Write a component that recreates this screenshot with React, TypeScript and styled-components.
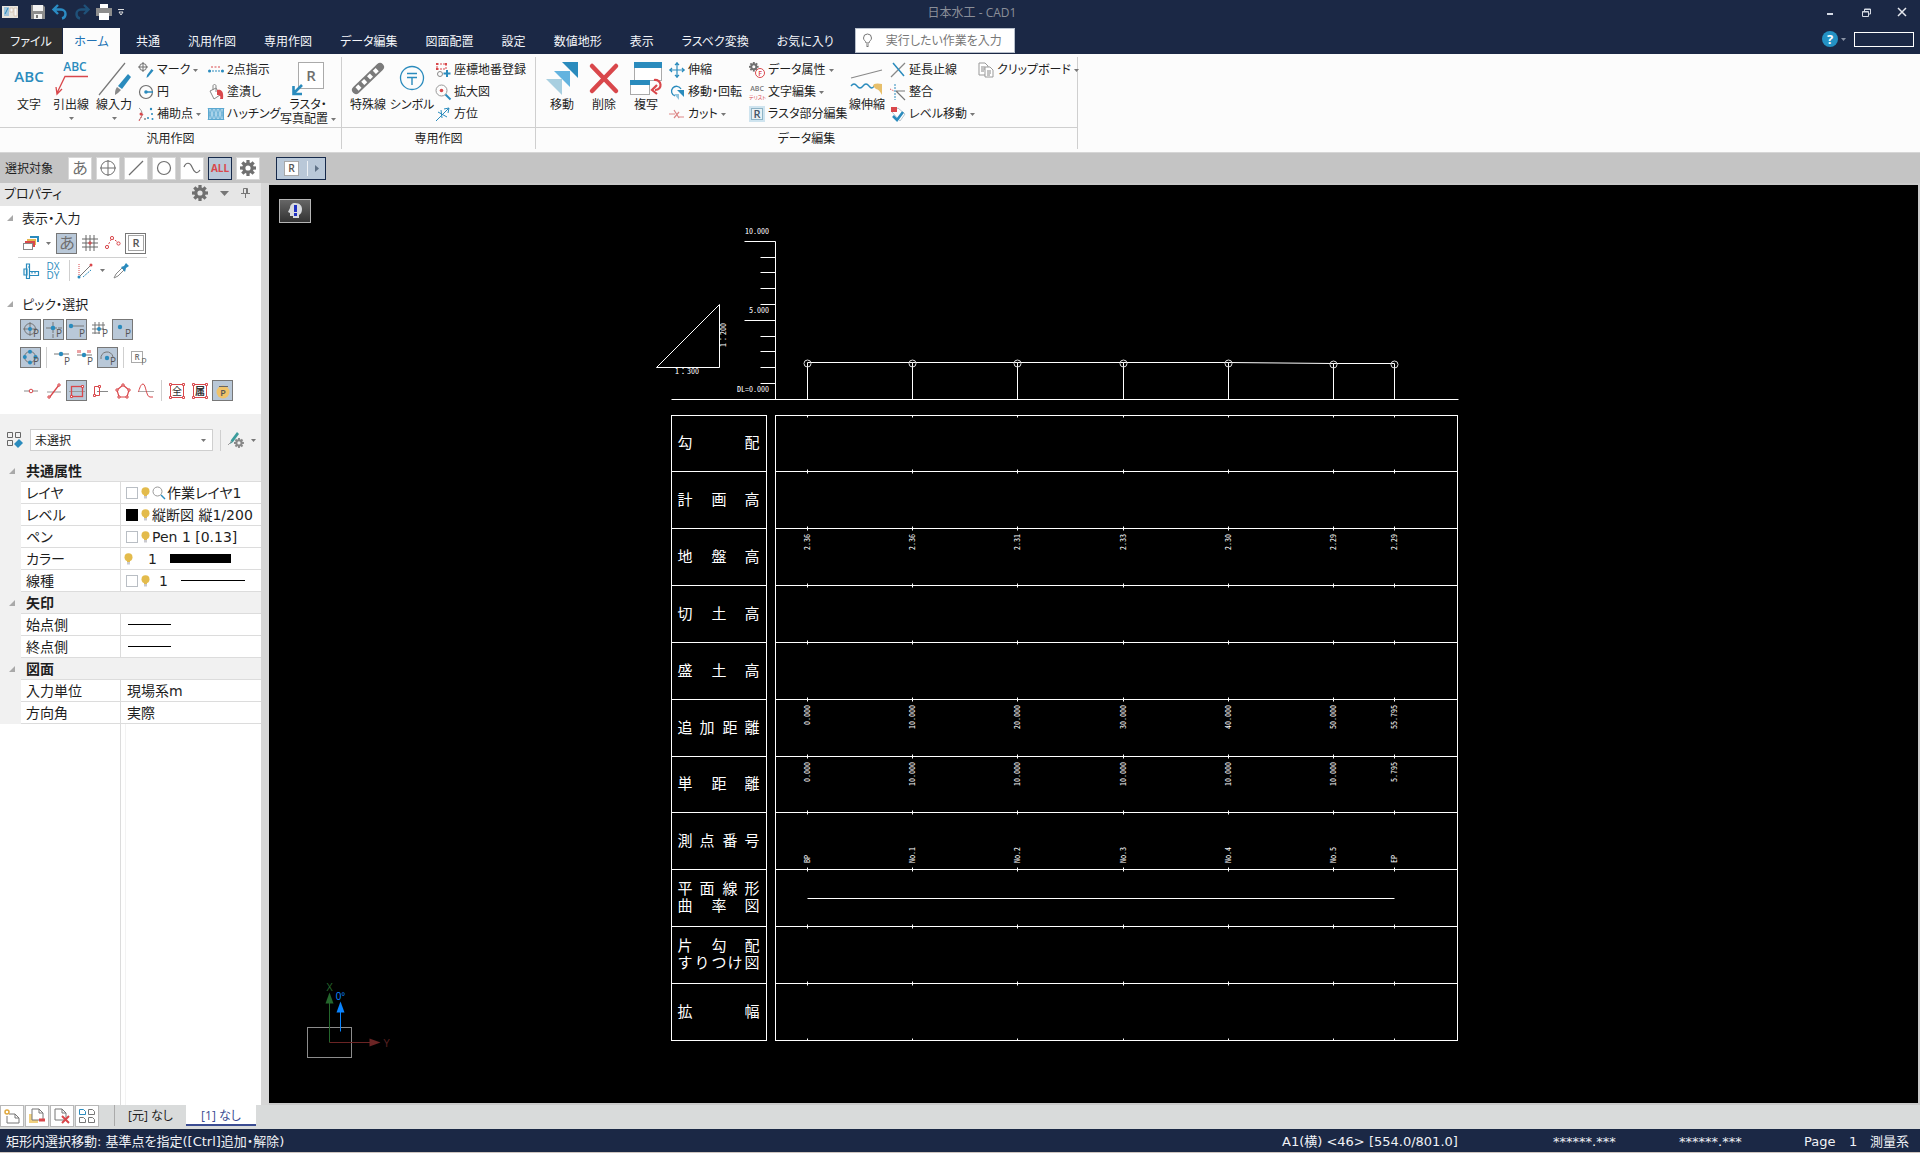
import React from "react";
import styled, { createGlobalStyle, css } from "styled-components";

const UI = `"Open Sans", "Noto Sans CJK JP", sans-serif`;
const WIDE = `"DejaVu Sans", "Noto Sans CJK JP", sans-serif`;
const CAD = `"Noto Sans CJK JP", sans-serif`;

const navy = "#1b2845";
const blue = "#2a8bbd";
const red = "#d9474b";
const gray = "#6f6f6f";
const pressed = "#b9c8d8";

const GlobalStyle = createGlobalStyle`
  * { box-sizing: border-box; }
  body {
    margin: 0;
    background: #d9dbdb;
    font-family: ${UI};
    font-size: 12px;
    font-feature-settings: "palt";
    color: #1e1e1e;
  }
  button, input, select {
    font: inherit;
    font-feature-settings: inherit;
    color: inherit;
    margin: 0;
    padding: 0;
    border: 0;
    border-radius: 0;
    background: none;
  }
  svg { display: block; flex: none; overflow: visible; }
`;

const Shell = styled.div`
  display: flex;
  flex-direction: column;
  min-height: 100vh;
`;

/* ---------- title bar ---------- */
const TitleBar = styled.header`
  display: flex;
  height: 28px;
  background: ${navy};
`;
const QuickAccess = styled.div`
  display: flex;
  align-items: center;
  width: 132px;
  height: 24px;
  padding-left: 2px;
  gap: 6px;
  & > svg { margin-right: 6px; }
`;
const QuickButton = styled.button`
  display: flex;
  width: 16px;
`;
const WindowTitle = styled.h1`
  flex: 1;
  margin: 0;
  font-size: 12px;
  font-weight: 400;
  line-height: 25px;
  text-align: center;
  color: #8b8f99;
`;
const WindowButton = styled.button`
  display: flex;
  align-items: center;
  justify-content: center;
  width: 36px;
  height: 24px;
`;

/* ---------- ribbon tabs ---------- */
const TabBar = styled.nav`
  display: flex;
  height: 26px;
  background: ${navy};
`;
const Tab = styled.button<{ $kind?: "file" | "active" }>`
  padding: 0 14px;
  line-height: 25px;
  color: #f4f6fa;
  white-space: nowrap;
  ${(p) => p.$kind === "file" && css`width: 62px; padding: 0; margin-right: 1px; background: #2f2f2f;`}
  ${(p) => p.$kind === "active" && css`width: 57px; padding: 0; margin-right: 2px; background: #fcfcfc; color: #2272b4;`}
`;
const Search = styled.label`
  display: flex;
  align-items: center;
  gap: 14px;
  width: 160px;
  height: 25px;
  margin-left: 7px;
  padding-left: 7px;
  background: #fff;
  border: 1px solid #b8c0cc;
`;
const SearchInput = styled.input`
  width: 120px;
  outline: none;
  &::placeholder { color: #777; opacity: 1; }
`;
const HelpArea = styled.div`
  display: flex;
  align-items: center;
  gap: 4px;
  height: 22px;
  margin-left: auto;
  padding-right: 6px;
`;
const HelpButton = styled.button`
  display: flex;
  align-items: center;
  gap: 3px;
`;
const AccountBox = styled.button`
  width: 60px;
  height: 15px;
  margin-left: 4px;
  border: 1px solid #fff;
`;

/* ---------- ribbon ---------- */
const Ribbon = styled.div`
  display: flex;
  height: 98px;
  padding-top: 3px;
  background: #fcfcfc;
`;
const Group = styled.section<{ $pad: number; $width: number }>`
  display: flex;
  flex-direction: column;
  width: ${(p) => p.$width}px;
  height: 92px;
  border-right: 1px solid #cfcfcf;
  & > div { padding-left: ${(p) => p.$pad}px; }
`;
const GroupBody = styled.div`
  display: flex;
  height: 73px;
  border-bottom: 1px solid #cfcfcf;
`;
const GroupName = styled.h2`
  margin: 0;
  font-size: 12px;
  font-weight: 400;
  line-height: 21px;
  text-align: center;
`;
const BigButton = styled.button<{ $width: number }>`
  display: flex;
  flex-direction: column;
  align-items: center;
  justify-content: flex-start;
  width: ${(p) => p.$width}px;
  padding-top: 5px;
  line-height: 14px;
  white-space: nowrap;
  & > svg:first-child { margin-bottom: 3px; }
  & > svg:last-child { margin-top: 5px; }
`;
const CaptionRow = styled.span`
  display: flex;
  align-items: center;
  gap: 3px;
`;
const SmallColumn = styled.div<{ $width: number }>`
  display: flex;
  flex-direction: column;
  width: ${(p) => p.$width}px;
  padding-top: 2px;
`;
const SmallButton = styled.button`
  display: flex;
  align-items: center;
  gap: 3px;
  height: 22px;
  padding-left: 2px;
  line-height: 22px;
  white-space: nowrap;
`;

/* ---------- selection bar ---------- */
const SelectionBar = styled.div`
  display: flex;
  align-items: center;
  gap: 4px;
  height: 31px;
  padding-left: 5px;
  background: #c4c4c4;
  border-top: 1px solid #d6d6d6;
`;
const BarLabel = styled.span`
  width: 59px;
`;
const FilterButton = styled.button<{ $on?: boolean; $wide?: boolean }>`
  display: flex;
  align-items: center;
  justify-content: center;
  gap: 8px;
  width: ${(p) => (p.$wide ? 50 : 24)}px;
  height: 23px;
  margin-left: ${(p) => (p.$wide ? 12 : 0)}px;
  background: ${(p) => (p.$on ? pressed : "#fff")};
  border: 1px solid ${(p) => (p.$on ? "#16294a" : "#d8d8d8")};
`;

/* ---------- workspace ---------- */
const Workspace = styled.main`
  display: flex;
  flex: 1;
`;
const Panel = styled.aside`
  display: flex;
  flex-direction: column;
  width: 269px;
  background: #fff;
  border-right: 8px solid #d6d6d6;
`;
const PanelHeader = styled.div`
  display: flex;
  align-items: center;
  height: 23px;
  padding: 0 11px 3px 4px;
  gap: 12px;
  background: #e6e6e6;
`;
const PanelTitle = styled.h2`
  flex: 1;
  margin: 0;
  font-size: 13px;
  font-weight: 400;
  line-height: 20px;
`;
const IconButton = styled.button`
  display: flex;
`;
const ToolSection = styled.section<{ $height: number }>`
  height: ${(p) => p.$height}px;
  padding: 2px 0 0 7px;
`;
const SectionTitle = styled.h3`
  display: flex;
  align-items: center;
  gap: 9px;
  margin: 0;
  font-size: 13px;
  font-weight: 400;
  line-height: 20px;
`;
const ToolRow = styled.div<{ $top: number; $line?: boolean }>`
  display: flex;
  align-items: center;
  gap: 2px;
  width: ${(p) => (p.$line ? "129px" : "auto")};
  height: ${(p) => (p.$line ? 25 : 21)}px;
  margin: ${(p) => p.$top}px 0 0 11px;
  padding: ${(p) => (p.$line ? "0 0 4px 2px" : "0 0 0 2px")};
  border-bottom: ${(p) => (p.$line ? "1px solid #d0d0d0" : "0")};
`;
const Tool = styled.button<{ $on?: boolean; $frame?: boolean }>`
  display: flex;
  align-items: center;
  justify-content: center;
  width: 21px;
  height: 21px;
  background: ${(p) => (p.$on ? pressed : "transparent")};
  border: 1px solid ${(p) => (p.$on || p.$frame ? "#777" : "transparent")};
`;
const CaretButton = styled.button`
  display: flex;
  justify-content: center;
  width: 11px;
`;
const Divider = styled.span`
  width: 1px;
  height: 21px;
  margin: 0 2px 0 3px;
  background: #cfcfcf;
`;
const PresetRow = styled.div`
  display: flex;
  align-items: center;
  height: 46px;
  padding: 8px 0 2px 7px;
  gap: 7px;
  background: #f1f1f1;
  & > ${Divider} { margin: 0; }
`;
const PresetField = styled.label`
  position: relative;
  display: flex;
  align-items: center;
  width: 183px;
  & > svg { position: absolute; right: 7px; pointer-events: none; }
`;
const PresetSelect = styled.select`
  width: 100%;
  height: 22px;
  padding-left: 4px;
  appearance: none;
  background: #fff;
  border: 1px solid #cfcfcf;
`;

/* ---------- property table ---------- */
const PropertyTable = styled.table`
  width: 100%;
  table-layout: fixed;
  border-spacing: 0;
  font-family: ${WIDE};
  font-size: 14px;
  line-height: 20px;
  background: #f1f1f1;
  white-space: nowrap;
`;
const Gutter = styled.td`
  padding: 0 0 0 9px;
`;
const PropertyGroup = styled.th`
  height: 22px;
  padding: 0 0 0 5px;
  font-weight: 700;
  text-align: left;
  border-bottom: 1px solid #dcdcdc;
`;
const PropertyName = styled.th`
  height: 22px;
  padding: 0 0 0 5px;
  font-weight: 400;
  text-align: left;
  background: #fff;
  border-right: 1px solid #dcdcdc;
  border-bottom: 1px solid #dcdcdc;
`;
const PropertyCell = styled.td`
  height: 22px;
  padding: 0;
  background: #fff;
  border-bottom: 1px solid #dcdcdc;
  overflow: hidden;
`;
const Value = styled.div<{ $indent: number }>`
  display: flex;
  align-items: center;
  gap: 2px;
  height: 21px;
  padding-left: ${(p) => p.$indent}px;
`;
const Swatch = styled.input`
  flex: none;
  width: 12px;
  height: 12px;
  margin-right: 1px;
  appearance: none;
  background: #fff;
  border: 1px solid #b9bec4;
  &:checked { background: #000; border-color: #000; }
`;
const Count = styled.span<{ $left: number }>`
  width: ${(p) => p.$left + 20}px;
  padding-left: ${(p) => p.$left}px;
`;
const Sample = styled.span<{ $width: number; $height: number }>`
  width: ${(p) => p.$width}px;
  height: ${(p) => p.$height}px;
  background: #000;
`;
const PanelFill = styled.div`
  flex: 1;
  width: 6px;
  margin-left: 120px;
  border-left: 1px solid #dcdcdc;
  border-right: 1px solid #f3f3f3;
`;

/* ---------- canvas ---------- */
const Canvas = styled.div`
  position: relative;
  flex: 1;
  display: flex;
  background: #000;
  border: solid #c9c9c9;
  border-width: 2px 2px 2px 0;
`;
const Drawing = styled.svg`
  width: 100%;
  height: auto;
  font-family: ${CAD};
`;
const HintButton = styled.button`
  position: absolute;
  left: 10px;
  top: 14px;
  display: flex;
  align-items: center;
  justify-content: center;
  width: 32px;
  height: 24px;
  background: linear-gradient(#666, #333);
  border: 1px solid #b5b5b5;
`;

/* ---------- bottom ---------- */
const PageBar = styled.div`
  display: flex;
  height: 24px;
  background: #d9dbdb;
`;
const PageButton = styled.button`
  display: flex;
  align-items: center;
  justify-content: center;
  width: 24px;
  height: 22px;
  margin-right: 1px;
  background: #fff;
  border: 1px solid #b8b8b8;
`;
const PageTab = styled.button<{ $active?: boolean }>`
  width: ${(p) => (p.$active ? 70 : 72)}px;
  height: 21px;
  margin-left: ${(p) => (p.$active ? 0 : 14)}px;
  line-height: ${(p) => (p.$active ? 19 : 21)}px;
  padding-top: ${(p) => (p.$active ? 1 : 0)}px;
  border-left: ${(p) => (p.$active ? "0" : "1px solid #aaa")};
  border-bottom: ${(p) => (p.$active ? "2px solid #3b4c92" : "0")};
  background: ${(p) => (p.$active ? "#fff" : "transparent")};
  color: ${(p) => (p.$active ? "#3b4c92" : "inherit")};
`;
const StatusBar = styled.footer`
  display: flex;
  height: 24px;
  padding: 1px 11px 0 6px;
  font-family: ${WIDE};
  font-size: 13px;
  line-height: 24px;
  color: #f0f2f6;
  background: ${navy};
  border-bottom: 1px solid #cfc6c0;
  white-space: nowrap;
`;
const StatusMessage = styled.span`
  flex: 1;
`;
const StatusItem = styled.span<{ $width: number }>`
  width: ${(p) => p.$width}px;
`;

/* ---------- icons ---------- */
const Svg = ({ w = 16, h = 16, children }: { w?: number; h?: number; children: React.ReactNode }) => (
  <svg width={w} height={h} viewBox={`0 0 ${w} ${h}`} fill="none" aria-hidden="true">{children}</svg>
);
const Caret = ({ color = "#777" }: { color?: string }) => (
  <Svg w={5} h={3}><path d="M0 0h5L2.5 3z" fill={color} /></Svg>
);
const Fold = () => <Svg w={6} h={6}><path d="M6 0v6H0z" fill="#a9a9a9" /></Svg>;
const Glyph = ({ x, y, size, fill = gray, weight = 600, children }: any) => (
  <text x={x} y={y} fontSize={size} fill={fill} fontWeight={weight} textAnchor="middle">{children}</text>
);
const teeth = [0, 45, 90, 135, 180, 225, 270, 315];
const Gear = ({ size = 16, color = "#707070" }: { size?: number; color?: string }) => (
  <svg width={size} height={size} viewBox="0 0 16 16" aria-hidden="true">
    <circle cx="8" cy="8" r="4.2" fill="none" stroke={color} strokeWidth="3.2" />
    {teeth.map((a) => <rect key={a} x="6.4" y="0" width="3.2" height="3.4" fill={color} transform={`rotate(${a} 8 8)`} />)}
  </svg>
);
const Bulb = () => (
  <Svg w={9} h={12}>
    <circle cx="4.5" cy="4.2" r="4" fill="#e3bb4c" />
    <path d="M3 7h3v2H3z" fill="#e3bb4c" /><path d="M3 9h3v2.5H3z" fill="#c9c9cf" />
  </Svg>
);
const FramedR = ({ size = 16 }: { size?: number }) => (
  <svg width={size} height={size} viewBox="0 0 16 16" fill="none" aria-hidden="true">
    <rect x=".5" y=".5" width="15" height="15" fill="#fff" stroke="#a5a5a5" />
    <Glyph x={8} y={12} size={11} fill="#555">R</Glyph>
  </svg>
);

const icons: Record<string, React.ReactNode> = {
  app: <Svg><path d="M0 2h16v12H0z" fill="#e8e4dc" /><path d="M2 3h5v9H2z" fill="#9fc4dc" /><path d="M8 4h3v4H8zM12 4h3v8h-3z" fill="#f7f7f7" stroke="#c9b49c" strokeWidth=".6" /><path d="M3 10l3-6" stroke={blue} /></Svg>,
  save: <Svg><path d="M1 1h12l2 2v12H1z" fill="#8d8d8d" /><path d="M3 1h10v6H3z" fill="#f2f2f2" /><path d="M4 10h8v5H4z" fill="#f2f2f2" /><path d="M6 11h2v3H6z" fill="#777" /></Svg>,
  undo: <Svg><path d="M6 1L1.500 5.500 6 10M2 5.500h7a4.500 4.500 0 014.500 4.500c0 2.500-1.500 4-3.500 4.500" stroke="#2b8cc4" strokeWidth="2.400" /></Svg>,
  redo: <Svg><path d="M10 1l4.500 4.500L10 10M14 5.500H7A4.500 4.500 0 002.500 10c0 2.500 1.500 4 3.500 4.500" stroke="#1f5179" strokeWidth="2.400" /></Svg>,
  print: <Svg><path d="M4 0h8v4H4z" fill="#fff" /><path d="M0 4h16v8H0z" fill="#8d8d8d" /><path d="M3 9h10v7H3z" fill="#fff" /></Svg>,
  text: <Svg w={32} h={33}><Glyph x={16} y={20} size={15} fill={blue}>ABC</Glyph></Svg>,
  leader: <Svg w={33} h={33}><Glyph x={20} y={9} size={12} fill={blue}>ABC</Glyph><path d="M33 14.500H10L2 31M1 25l1 7 5-5" stroke={red} strokeWidth="1.300" /></Svg>,
  lineInput: <Svg w={33} h={33}><path d="M1 33L27 1" stroke="#777" strokeWidth="1.200" /><path d="M30 12l3 3-9 12-4-3z" fill={blue} /><path d="M19 25l4 3-3 3-3 2c0-3 0-5 2-8z" fill="#888" /></Svg>,
  raster: <Svg w={32} h={33}><rect x="6.500" y=".5" width="25" height="26" fill="#fff" stroke="#aaa" /><Glyph x={19} y={19} size={15}>R</Glyph><path d="M10 23L2 31M1.500 24v8H10" stroke={blue} strokeWidth="2.600" /></Svg>,
  mark: <Svg><circle cx="5" cy="5" r="3.500" stroke={gray} /><path d="M5 0v10M0 5h10" stroke={gray} /><path d="M13.500 7l2 1.500-5 6-2 1.500.6-3z" fill={blue} /></Svg>,
  circle: <Svg><circle cx="8" cy="8" r="6.500" stroke={gray} strokeWidth="1.200" /><path d="M8 8h7" stroke={blue} strokeWidth="1.500" /><circle cx="8" cy="8" r="1.800" fill={blue} /></Svg>,
  aux: <Svg><path d="M1 2c4 3 4 8 0 12" stroke="#999" /><path d="M5 8l-4 7" stroke={red} strokeDasharray="2 1" /><circle cx="3" cy="8" r="1.500" fill={red} /><circle cx="13" cy="3" r="1.200" fill={blue} /><circle cx="14" cy="8" r="1" fill={blue} /><circle cx="10" cy="12" r="1" fill={blue} /><circle cx="14.500" cy="13" r="1" fill={blue} /><circle cx="7" cy="13" r="1" fill="#888" /></Svg>,
  twoPoint: <Svg><path d="M1 9h14" stroke={blue} strokeDasharray="2 1" /><circle cx="1.500" cy="9" r="1.500" fill={blue} /><circle cx="14.500" cy="9" r="1.500" fill={blue} /><path d="M3 5h10" stroke={red} strokeDasharray="2 1.500" /></Svg>,
  fill: <Svg><path d="M2 7l6-3 4 7-6 4z" stroke="#888" fill="#fff" /><path d="M5 6V2c0-2 3-2 3 0v6" stroke="#888" /><path d="M9 6c4-1 7 1 6 9l-3 0c1-3 0-4-3-4z" fill={red} /></Svg>,
  hatch: <Svg><path d="M0 2h16v12H0z" fill="#a9d3ea" />{[0, 4, 8, 12].map((i) => <path key={i} d={`M${i} 14l4-12M${i} 2l4 12`} stroke="#5ba8d0" strokeWidth=".7" />)}<rect x=".5" y="2.500" width="15" height="11" stroke="#5ba8d0" /></Svg>,
  rail: <Svg w={32} h={33}><path d="M4 28L28 5" stroke="#7b7b7b" strokeWidth="8" strokeLinecap="round" /><path d="M5 27L28 5" stroke="#fff" strokeWidth="4.500" strokeDasharray="4 4" /></Svg>,
  symbol: <Svg w={32} h={33}><circle cx="16" cy="16" r="11.500" stroke={blue} strokeWidth="1.300" /><path d="M11 11.500h10M11 15.500h10M16 15.500V23" stroke={blue} strokeWidth="1.400" /></Svg>,
  coord: <Svg><path d="M2 2h9v5H2z" stroke={red} strokeDasharray="2 1" /><path d="M1 1h2v2H1zM10 1h2v2h-2zM1 6h2v2H1z" fill={red} /><circle cx="5" cy="12" r="2.500" stroke="#888" /><path d="M12 8v7M8.500 11.500h7" stroke={blue} strokeWidth="2" /></Svg>,
  zoomIn: <Svg><circle cx="6.500" cy="6.500" r="5.500" stroke="#999" /><circle cx="6.500" cy="6.500" r="1.800" fill={red} /><path d="M10.500 10.500l5 5" stroke={blue} strokeWidth="2" /></Svg>,
  compass: <Svg><path d="M1 15L14 2M14 2l-5 1M14 2l-1 5M3 6l9 5M7 12l-1-8" stroke={blue} /></Svg>,
  move: <Svg w={32} h={33}><path d="M16 0h16v16z" fill={blue} /><path d="M8 9h16v16z" fill="#63b3df" /><path d="M0 17h16v16z" fill="#a8cfe0" /></Svg>,
  remove: <Svg w={32} h={33}><path d="M4 4l24 25M28 4L4 29" stroke={red} strokeWidth="4.500" strokeLinecap="round" /></Svg>,
  copy: <Svg w={32} h={33}><rect x="4.500" y=".5" width="27" height="18" fill="#fff" stroke="#aaa" /><path d="M4 0h28v6H4z" fill={blue} /><rect x=".5" y="18.500" width="19" height="14" fill="#fff" stroke="#aaa" /><path d="M0 18h20v5H0z" fill={blue} /><path d="M24 18c8-1 9 10 1 10M27 23l-5 5 5 4" stroke={red} strokeWidth="2.200" /></Svg>,
  stretch: <Svg><path d="M8 0v16M0 8h16M6 3l2-2 2 2M6 13l2 2 2-2M3 6L1 8l2 2M13 6l2 2-2 2" stroke={blue} strokeWidth="1.200" /></Svg>,
  rotate: <Svg><path d="M6 12A5 5 0 1112 5" stroke={blue} strokeWidth="1.300" /><path d="M8 6h7v7z" fill={blue} /><path d="M5 10h5v6z" fill="#8fc4de" /></Svg>,
  cut: <Svg><path d="M0 8h6M5 4l5 8M5 12l5-6M9 11h6" stroke="#d88" strokeWidth="1.200" /></Svg>,
  attr: <Svg><g transform="scale(.6)"><Gear /></g><circle cx="11" cy="11" r="4.500" fill="#fff" stroke={red} /><Glyph x={11} y={14} size={7} fill={red}>F</Glyph></Svg>,
  textEdit: <Svg><Glyph x={8} y={7} size={7} fill="#777">ABC</Glyph><text x="0" y="15" fontSize="5" fill={red}>テリスト</text></Svg>,
  rasterEdit: <Svg><path d="M0 0h16v16H0z" fill="#cfe4ef" /><rect x="2.500" y="2.500" width="11" height="11" fill="#e8f1f5" stroke="#8fb4c6" /><Glyph x={8} y={12} size={11} fill="#456">R</Glyph></Svg>,
  lineStretch: <Svg w={32} h={33}><path d="M0 16L31 8" stroke="#888" strokeWidth="1.200" /><path d="M0 24q3-4 6 0t6 0 6 0 5 0" stroke={blue} strokeWidth="1.300" /><path d="M22 24c0-3 5-3 9-2v11c-2-4-4-6-6-6z" fill="#e7bf6b" /></Svg>,
  extend: <Svg><path d="M1 15L15 1" stroke="#888" strokeWidth="1.200" /><path d="M3 1l11 13" stroke={blue} strokeWidth="1.500" /></Svg>,
  align: <Svg><path d="M5 0v16" stroke={blue} strokeDasharray="2 1" /><path d="M0 5l4 2" stroke={red} strokeDasharray="1 1" /><path d="M6 7h9M6 7l9 9" stroke="#777" strokeWidth="1.200" /></Svg>,
  level: <Svg><path d="M2 6l6-4 7 6-5 7z" fill="#fff" stroke="#b9c6cf" /><path d="M1 1h6v5H1z" fill={red} /><path d="M3 10l4 4 6-8" stroke={blue} strokeWidth="2.600" /></Svg>,
  clipboard: <Svg><path d="M1 1h6l3 3v9H1z" fill="#fff" stroke="#999" /><path d="M3 5h4M3 7h4M3 9h3" stroke="#888" /><path d="M7 5h5l3 3v7H7z" fill="#fff" stroke="#999" /><path d="M9 9h4M9 11h4M9 13h3" stroke="#888" /></Svg>,
};

/* ---------- ribbon content ---------- */
type Small = [icon: string, label: string, menu?: boolean];
const Column = ({ width, items }: { width: number; items: Small[] }) => (
  <SmallColumn $width={width}>
    {items.map(([icon, label, menu]) => (
      <SmallButton key={label}>{icons[icon]}{label}{menu && <Caret />}</SmallButton>
    ))}
  </SmallColumn>
);
const Big = ({ icon, label, width = 42, menu }: { icon: string; label: string; width?: number; menu?: boolean }) => (
  <BigButton $width={width}>{icons[icon]}<span>{label}</span>{menu && <Caret />}</BigButton>
);

const tabs = ["共通", "汎用作図", "専用作図", "データ編集", "図面配置", "設定", "数値地形", "表示", "ラスベク変換", "お気に入り"];

/* ---------- pick tools ---------- */
const P = () => <Glyph x={13} y={15} size={10} fill="#555" weight={400}>P</Glyph>;
const toolIcons: Record<string, React.ReactNode> = {
  layers: <Svg><path d="M7 1h9v6h-2V3H7z" fill={blue} /><path d="M4 4h9v6h-2V6H4z" fill="#e6b84f" /><path d="M2 6h10v6h-2V8H2z" fill={red} /><rect x=".5" y="8.500" width="9" height="6" fill="#fff" stroke="#888" /></Svg>,
  a: <Svg><Glyph x={8} y={14} size={16} weight={400}>あ</Glyph></Svg>,
  hash: <Svg><path d="M4 0v16M8 0v16M12 0v16M0 4h16M0 8h16M0 12h16" stroke="#666" /><path d="M8 6v4M6 8h4" stroke={red} /></Svg>,
  nodes: <Svg><path d="M2 12L7 3l7 5" stroke={red} strokeDasharray="2 1.500" /><circle cx="2" cy="12" r="1.600" stroke={red} fill="#fff" /><circle cx="7" cy="3" r="1.600" stroke={red} fill="#fff" /><circle cx="13.500" cy="8.500" r="1.600" stroke={red} fill="#fff" /></Svg>,
  ruler: <Svg><path d="M3.500 1v14.500h3V1zM1 6h3v6H1zM6.500 8.500h9v4h-9M9 8.500v2M12 8.500v2M6.500 4H5" stroke={blue} strokeWidth="1.200" /></Svg>,
  dxdy: <Svg><Glyph x={7} y={7} size={10} fill={blue} weight={400}>DX</Glyph><Glyph x={7} y={16} size={10} fill={blue} weight={400}>DY</Glyph></Svg>,
  snapLine: <Svg><path d="M2 14L13 3" stroke="#777" /><path d="M2 1v12" stroke={red} strokeDasharray="1 1" /><path d="M6 14l8-7" stroke={blue} strokeDasharray="2 1" /><circle cx="2" cy="14" r="1.500" fill={blue} /><circle cx="14" cy="2" r="1.500" fill={red} /></Svg>,
  dropper: <Svg><path d="M1 15l2-4 6-6 2 2-6 6z" stroke="#888" /><path d="M8 4l3-1 2-3 3 3-3 2-1 4z" fill={blue} /></Svg>,
  pCross: <Svg><circle cx="7" cy="7" r="5.500" stroke="#777" /><path d="M7 0v14M0 7h14" stroke="#777" /><circle cx="7" cy="7" r="2" fill={blue} /><P /></Svg>,
  pInter: <Svg><path d="M7 0v16M0 6h16" stroke="#777" strokeDasharray="5 1" /><circle cx="7" cy="6" r="2.300" fill={blue} /><P /></Svg>,
  pEnd: <Svg><path d="M2 4h13" stroke="#777" /><circle cx="2" cy="4" r="2.200" fill={blue} /><P /></Svg>,
  pGrid: <Svg><path d="M3 0v12M7 0v12M11 0v8M0 3h13M0 7h12M0 11h8" stroke="#777" /><circle cx="7" cy="7" r="2" fill={blue} /><P /></Svg>,
  pPoint: <Svg><circle cx="5" cy="5" r="2.200" fill={blue} /><P /></Svg>,
  pQuad: <Svg><circle cx="7" cy="7" r="5.500" stroke="#777" /><circle cx="7" cy="1.800" r="2" fill={blue} /><circle cx="1.800" cy="7" r="2" fill={blue} /><circle cx="7" cy="12.500" r="2" fill={blue} /><circle cx="12.500" cy="7" r="2" fill={blue} /><P /></Svg>,
  pOn: <Svg><path d="M0 4h15" stroke="#777" /><circle cx="7" cy="4" r="2.200" fill={blue} /><P /></Svg>,
  pMid: <Svg><path d="M0 5h15" stroke="#777" /><path d="M1 0v3M3 0v3M11 0v3M13 0v3" stroke={red} /><circle cx="7" cy="5" r="2.200" fill={blue} /><P /></Svg>,
  pCenter: <Svg><path d="M1 9a6 6 0 0112-2" stroke="#777" /><circle cx="7" cy="8" r="2.200" fill={blue} /><P /></Svg>,
  pRaster: <Svg><rect x=".5" y="1.500" width="11" height="11" stroke="#aaa" /><Glyph x={6} y={10} size={8}>R</Glyph><Glyph x={13} y={15} size={9} weight={400}>P</Glyph></Svg>,
  sPoint: <Svg><path d="M1 8h14" stroke="#888" /><circle cx="8" cy="8" r="1.800" fill="#fff" stroke={red} /></Svg>,
  sLine: <Svg><path d="M1 9h14" stroke="#999" /><path d="M3 15L13 2" stroke={red} strokeWidth="1.300" /><path d="M2 13h2v2H2zM12 1h2v2h-2z" fill="#fff" stroke={red} /></Svg>,
  sRect: <Svg><path d="M0 8.500h16" stroke="#999" /><rect x="2.500" y="3.500" width="11" height="10" stroke={red} strokeWidth="1.300" /><path d="M1.500 12.500h2v2h-2zM12.500 2.500h2v2h-2z" fill="#fff" stroke={red} /></Svg>,
  sCross: <Svg><path d="M5 8.500h11" stroke="#888" /><path d="M2.500 3.500h5v9h-5z" stroke={red} /><path d="M1.500 11.500h2v2h-2zM6.500 2.500h2v2h-2z" fill="#fff" stroke={red} /></Svg>,
  sPoly: <Svg><path d="M8 2l6 5-2 7H4L2 7z" stroke={red} strokeWidth="1.200" /><path d="M7 1h2v2H7zM13 6h2v2h-2zM11 13h2v2h-2zM3 13h2v2H3zM1 6h2v2H1z" fill="#fff" stroke={red} /></Svg>,
  sFree: <Svg><path d="M0 8.500h16" stroke="#aaa" /><path d="M0 9C1 9 2 1 5 1s3 13 7 13l3 0" stroke={red} /></Svg>,
  sAll: <Svg><rect x="1.500" y="1.500" width="13" height="13" stroke={red} /><path d="M.5.5h2v2h-2zM13.500.5h2v2h-2zM.5 13.500h2v2h-2zM13.500 13.500h2v2h-2z" fill="#fff" stroke={red} /><Glyph x={8} y={12} size={10} fill="#333" weight={400}>全</Glyph></Svg>,
  sAttr: <Svg><rect x="1.500" y="1.500" width="13" height="13" stroke={red} /><path d="M.5.5h2v2h-2zM13.500.5h2v2h-2zM.5 13.500h2v2h-2zM13.500 13.500h2v2h-2z" fill="#fff" stroke={red} /><Glyph x={8} y={12} size={10} fill="#333">属</Glyph></Svg>,
  sPlace: <Svg><circle cx="8" cy="9" r="6.500" fill="#f0c36a" /><path d="M4 3.500h9" stroke="#666" /><Glyph x={8} y={13} size={9} fill="#555">P</Glyph></Svg>,
};
/* "|" is a divider, "v" a menu caret, a leading "*" a pressed tool, a leading "+" a framed one */
const Tools = ({ top, line, items }: { top: number; line?: boolean; items: string[] }) => (
  <ToolRow $top={top} $line={line}>
    {items.map((it, i) => {
      if (it === "|") return <Divider key={i} />;
      if (it === "v") return <CaretButton key={i} aria-label="menu"><Caret /></CaretButton>;
      const name = it.replace(/^[*+]/, "");
      return (
        <Tool key={i} aria-label={name} $on={it[0] === "*"} $frame={it[0] === "+"}>
          {name === "r" ? <FramedR /> : toolIcons[name]}
        </Tool>
      );
    })}
  </ToolRow>
);

const Header = ({ title }: { title: string }) => (
  <tr><Gutter><Fold /></Gutter><PropertyGroup colSpan={2} scope="colgroup">{title}</PropertyGroup></tr>
);
const Property = ({ name, indent = 5, children }: { name: string; indent?: number; children: React.ReactNode }) => (
  <tr>
    <Gutter />
    <PropertyName scope="row">{name}</PropertyName>
    <PropertyCell><Value $indent={indent}>{children}</Value></PropertyCell>
  </tr>
);

/* ---------- longitudinal profile ---------- */
const stations = [538, 643, 748, 854, 959, 1064, 1125];
const rowLines = [230, 286, 343, 400, 457, 514, 571, 627, 684, 741, 798, 855];
const rowNames = [["勾配"], ["計画高"], ["地盤高"], ["切土高"], ["盛土高"], ["追加距離"], ["単距離"], ["測点番号"], ["平面線形", "曲率図"], ["片勾配", "すりつけ図"], ["拡幅"]];
const scaleTicks = [56, 72, 87, 103, 119, 135, 151, 166, 182, 198];
const ground = ["2.36", "2.36", "2.31", "2.33", "2.30", "2.29", "2.29"];
const total = ["0.000", "10.000", "20.000", "30.000", "40.000", "50.000", "55.795"];
const single = ["0.000", "10.000", "10.000", "10.000", "10.000", "10.000", "5.795"];
const names = ["BP", "No.1", "No.2", "No.3", "No.4", "No.5", "EP"];
const spread = (s: string) => [...s].map((_, i) => Math.round(416 + (67 * i) / (s.length - 1))).join(" ");
const groundY = (i: number) => (i < 5 ? 177 : 178);

const RowNames = styled.g`
  font-size: 15px;
  font-feature-settings: normal;
  fill: #fff;
`;
const Figures = styled.g`
  font-size: 8px;
  font-feature-settings: "hwid";
  fill: #fff;
`;
const FullWidth = styled.tspan`
  font-feature-settings: normal;
`;
const Upright = ({ x, y, end, children }: { x: number; y: number; end?: boolean; children: React.ReactNode }) => (
  <text transform={`translate(${x} ${y}) rotate(-90)`} textAnchor={end ? "end" : "start"}>{children}</text>
);

const Profile = () => (
  <Drawing viewBox="0 0 1649 918" preserveAspectRatio="xMinYMin meet" role="img" aria-label="縦断図">
    <g transform="translate(.5 .5)" stroke="#fff" fill="none">
      <path d="M506 56V214M402 214H1189" />
      {scaleTicks.map((y, i) => <path key={y} d={`M${i % 5 ? 491 : 475} ${y}H506`} />)}
      <path d="M387 182H450V119Z" />
      <path d={`M${stations.map((x, i) => `${x} ${groundY(i)}`).join("L")}`} />
      {stations.map((x, i) => (
        <React.Fragment key={x}>
          <path d={`M${x} ${groundY(i)}V214`} />
          <circle cx={x} cy={groundY(i) + 1} r="3.500" stroke="#ddd" />
          {rowLines.map((y, r) => <path key={y} d={`M${x} ${r ? y - 2 : y}V${r < 11 ? y + 2 : y}`} />)}
        </React.Fragment>
      ))}
      <rect x="402" y="230" width="95" height="625" />
      <rect x="506" y="230" width="682" height="625" />
      {rowLines.slice(1, -1).map((y) => <path key={y} d={`M402 ${y}H497M506 ${y}H1188`} />)}
      <path d="M538 713H1125" />
    </g>
    <RowNames textAnchor="middle">
      {rowNames.map((lines, r) => lines.map((s, k) => {
        const mid = (rowLines[r] + rowLines[r + 1]) / 2;
        const y = Math.round(mid + 5 + (lines.length > 1 ? (k ? 8 : -9) : 0));
        return <text key={s} x={spread(s)} y={y}>{s}</text>;
      }))}
    </RowNames>
    <Figures>
      <g textAnchor="end">
        <text x="500" y="49">10.000</text>
        <text x="500" y="128">5.000</text>
        <text x="500" y="207">DL=0.000</text>
      </g>
      <text x="406" y="189">1<FullWidth>：</FullWidth>300</text>
      <Upright x={457} y={162}>1<FullWidth>：</FullWidth>200</Upright>
      {stations.map((x, i) => (
        <React.Fragment key={x}>
          <Upright x={x + 3} y={349} end>{ground[i]}</Upright>
          <Upright x={x + 3} y={520} end>{total[i]}</Upright>
          <Upright x={x + 3} y={577} end>{single[i]}</Upright>
          <Upright x={x + 3} y={678}>{names[i]}</Upright>
        </React.Fragment>
      ))}
    </Figures>
    <g transform="translate(.5 .5)">
      <rect x="38" y="842" width="44" height="30" fill="none" stroke="#8c8c8c" />
      <path d="M60 857V817" stroke="#24662c" /><path d="M60 807l4 11h-8z" fill="#24662c" />
      <path d="M60 857H101" stroke="#6b2424" /><path d="M111 857l-11 4v-8z" fill="#6b2424" />
      <path d="M71 846V826" stroke="#0a84ff" /><path d="M71 816l4 11h-8z" fill="#0a84ff" />
      <g fontSize="10" fontFamily="Liberation Sans, sans-serif" textAnchor="middle">
        <text x="60" y="805" fill="#24662c">X</text>
        <text x="71" y="814" fill="#0a84ff">0°</text>
        <text x="117" y="861" fill="#5a2020">Y</text>
      </g>
    </g>
  </Drawing>
);

export default function App() {
  return (
    <Shell>
      <GlobalStyle />
      <TitleBar>
        <QuickAccess>
          {icons.app}
          <QuickButton aria-label="保存">{icons.save}</QuickButton>
          <QuickButton aria-label="元に戻す">{icons.undo}</QuickButton>
          <QuickButton aria-label="やり直し">{icons.redo}</QuickButton>
          <QuickButton aria-label="印刷">{icons.print}</QuickButton>
          <QuickButton aria-label="カスタマイズ"><Svg w={6} h={7}><path d="M0 .5h6M1 3h4L3 6z" stroke="#ddd" /></Svg></QuickButton>
        </QuickAccess>
        <WindowTitle>日本水工 - CAD1</WindowTitle>
        <WindowButton aria-label="最小化"><Svg w={8} h={8}><path d="M1 6h6" stroke="#d5dae4" strokeWidth="2" /></Svg></WindowButton>
        <WindowButton aria-label="元のサイズ"><Svg w={9} h={9}><path d="M2.500 3V1h6v5h-2M.5 3.500h6v5h-6zM.5 4h6M2.500 1.500h6" stroke="#d5dae4" /></Svg></WindowButton>
        <WindowButton aria-label="閉じる"><Svg w={8} h={8}><path d="M0 0l8 8M8 0L0 8" stroke="#e6e9ef" strokeWidth="1.500" /></Svg></WindowButton>
      </TitleBar>

      <TabBar>
        <Tab $kind="file">ファイル</Tab>
        <Tab $kind="active">ホーム</Tab>
        {tabs.map((t) => <Tab key={t}>{t}</Tab>)}
        <Search>
          <Svg w={9} h={13}><path d="M3 9C3 7 .5 6.500.5 4a4 4 0 018 0C8.500 6.500 6 7 6 9zM3 11h3M3.500 12.500h2" stroke="#777" /></Svg>
          <SearchInput aria-label="作業の検索" placeholder="実行したい作業を入力" />
        </Search>
        <HelpArea>
          <HelpButton aria-label="ヘルプ">
            <Svg><circle cx="8" cy="8" r="8" fill="#2492c4" /><Glyph x={8} y={13} size={13} fill="#fff" weight={700}>?</Glyph></Svg>
            <Caret color="#8a93a5" />
          </HelpButton>
          <AccountBox aria-label="アカウント" />
        </HelpArea>
      </TabBar>

      <Ribbon>
        <Group $width={342} $pad={8}>
          <GroupBody>
            <Big icon="text" label="文字" />
            <Big icon="leader" label="引出線" menu />
            <Big icon="lineInput" label="線入力" width={44} menu />
            <Column width={70} items={[["mark", "マーク", true], ["circle", "円"], ["aux", "補助点", true]]} />
            <Column width={73} items={[["twoPoint", "2点指示"], ["fill", "塗潰し"], ["hatch", "ハッチング"]]} />
            <BigButton $width={58}>
              {icons.raster}ラスタ・
              <CaptionRow>写真配置<Caret /></CaptionRow>
            </BigButton>
          </GroupBody>
          <GroupName>汎用作図</GroupName>
        </Group>
        <Group $width={194} $pad={3}>
          <GroupBody>
            <Big icon="rail" label="特殊線" width={46} />
            <Big icon="symbol" label="シンボル" />
            <Column width={100} items={[["coord", "座標地番登録"], ["zoomIn", "拡大図"], ["compass", "方位"]]} />
          </GroupBody>
          <GroupName>専用作図</GroupName>
        </Group>
        <Group $width={542} $pad={5}>
          <GroupBody>
            <Big icon="move" label="移動" />
            <Big icon="remove" label="削除" />
            <Big icon="copy" label="複写" />
            <Column width={80} items={[["stretch", "伸縮"], ["rotate", "移動・回転"], ["cut", "カット", true]]} />
            <Column width={99} items={[["attr", "データ属性", true], ["textEdit", "文字編集", true], ["rasterEdit", "ラスタ部分編集"]]} />
            <Big icon="lineStretch" label="線伸縮" />
            <Column width={88} items={[["extend", "延長止線"], ["align", "整合"], ["level", "レベル移動", true]]} />
            <Column width={94} items={[["clipboard", "クリップボード", true]]} />
          </GroupBody>
          <GroupName>データ編集</GroupName>
        </Group>
      </Ribbon>

      <SelectionBar>
        <BarLabel>選択対象</BarLabel>
        <FilterButton aria-label="文字">{toolIcons.a}</FilterButton>
        <FilterButton aria-label="点"><Svg><circle cx="8" cy="8" r="7" stroke={gray} /><path d="M8 0v16M0 8h16" stroke={gray} /></Svg></FilterButton>
        <FilterButton aria-label="線"><Svg><path d="M1 15L15 1" stroke={gray} strokeWidth="1.200" /></Svg></FilterButton>
        <FilterButton aria-label="円"><Svg><circle cx="8" cy="8" r="6.500" stroke={gray} strokeWidth="1.200" /></Svg></FilterButton>
        <FilterButton aria-label="曲線"><Svg><path d="M0 7C2 2 6 2 8 7s5 8 8 3" stroke={gray} strokeWidth="1.200" /></Svg></FilterButton>
        <FilterButton aria-label="すべて" $on><Svg w={20}><Glyph x={10} y={12} size={10} fill={red} weight={700}>ALL</Glyph></Svg></FilterButton>
        <FilterButton aria-label="設定"><Gear /></FilterButton>
        <FilterButton aria-label="ラスタ" $on $wide>
          <FramedR size={15} />
          <Svg w={12} h={15}><path d="M.5 0v15" stroke="#eef2f6" /><path d="M8 4v7l4-3.500z" fill="#5f7186" /></Svg>
        </FilterButton>
      </SelectionBar>

      <Workspace>
        <Panel>
          <PanelHeader>
            <PanelTitle>プロパティ</PanelTitle>
            <IconButton aria-label="パネル設定"><Gear /></IconButton>
            <IconButton aria-label="パネルメニュー"><Svg w={9} h={5}><path d="M0 0h9L4.500 5z" fill="#777" /></Svg></IconButton>
            <IconButton aria-label="固定"><Svg w={9} h={10}><path d="M2.500.5h4v5h-4zM0 5.500h9M4.500 6v4M5.500 1v4" stroke="#777" /></Svg></IconButton>
          </PanelHeader>
          <ToolSection $height={86}>
            <SectionTitle><Fold />表示・入力</SectionTitle>
            <Tools top={5} line items={["layers", "v", "*a", "hash", "nodes", "+r"]} />
            <Tools top={2} items={["ruler", "dxdy", "|", "snapLine", "v", "dropper"]} />
          </ToolSection>
          <ToolSection $height={122}>
            <SectionTitle><Fold />ピック・選択</SectionTitle>
            <Tools top={5} items={["*pCross", "*pInter", "*pEnd", "pGrid", "*pPoint"]} />
            <Tools top={7} items={["*pQuad", "|", "pOn", "pMid", "*pCenter", "|", "pRaster"]} />
            <Tools top={12} items={["sPoint", "sLine", "*sRect", "sCross", "sPoly", "sFree", "|", "sAll", "sAttr", "*sPlace"]} />
          </ToolSection>
          <PresetRow>
            <Svg><path d="M.5.5h5v5h-5zM8.500.5h5v5h-5zM.5 8.500h5v5h-5z" stroke="#666" /><path d="M12 7l4 4-5 5-4-4z" fill={blue} /></Svg>
            <PresetField>
              <PresetSelect aria-label="プリセット" defaultValue="未選択"><option>未選択</option></PresetSelect>
              <Caret />
            </PresetField>
            <Divider />
            <IconButton aria-label="属性設定">
              <Svg><path d="M9 0l2 2-6 8-3 2 1-4z" fill="#3b9c9c" /><path d="M0 13l4-4" stroke="#999" /><g transform="translate(6 6) scale(.62)"><Gear color="#888" /></g></Svg>
            </IconButton>
            <IconButton aria-label="属性メニュー"><Caret /></IconButton>
          </PresetRow>
          <PropertyTable>
            <colgroup><col width="21" /><col width="100" /><col /></colgroup>
            <tbody>
              <Header title="共通属性" />
              <Property name="レイヤ">
                <Swatch type="checkbox" aria-label="レイヤ固定" /><Bulb />
                <Svg w={13} h={13}><circle cx="5.500" cy="5.500" r="4.500" stroke="#999" /><path d="M9 9l4 4" stroke={blue} strokeWidth="1.500" /></Svg>
                作業レイヤ1
              </Property>
              <Property name="レベル"><Swatch type="checkbox" aria-label="レベル固定" defaultChecked /><Bulb />縦断図 縦1/200</Property>
              <Property name="ペン"><Swatch type="checkbox" aria-label="ペン固定" /><Bulb />Pen 1 [0.13]</Property>
              <Property name="カラー" indent={3}><Bulb /><Count $left={13}>1</Count><Sample $width={61} $height={9} /></Property>
              <Property name="線種"><Swatch type="checkbox" aria-label="線種固定" /><Bulb /><Count $left={7}>1</Count><Sample $width={64} $height={1} /></Property>
              <Header title="矢印" />
              <Property name="始点側" indent={7}><Sample $width={43} $height={1} /></Property>
              <Property name="終点側" indent={7}><Sample $width={43} $height={1} /></Property>
              <Header title="図面" />
              <Property name="入力単位" indent={6}>現場系m</Property>
              <Property name="方向角" indent={6}>実際</Property>
            </tbody>
          </PropertyTable>
          <PanelFill />
        </Panel>
        <Canvas>
          <Profile />
          <HintButton aria-label="ヒント">
            <Svg><path d="M8 0c5 0 7 3 7 6s-1 5-3 6v3H6v-2H3v-3L1 9l2-4c0-3 2-5 5-5z" fill="#d8dadd" /><path d="M7 2h3v7H7zM7 10h3v3H7z" fill="#2030c0" /></Svg>
          </HintButton>
        </Canvas>
      </Workspace>

      <PageBar>
        <PageButton aria-label="新規ページ"><Svg><path d="M5 6h6l4 4v5H3V8M11 6v4h4" stroke="#777" /><circle cx="3" cy="4" r="2" stroke="#e0a83c" strokeWidth="1.500" /></Svg></PageButton>
        <PageButton aria-label="ページ複写"><Svg><path d="M0 6h9v9H0z" fill="#f0cf7f" /><path d="M3 1h7l4 4v7H3z" fill="#fff" stroke="#777" /><path d="M10 1v4h4" stroke="#777" /><path d="M10 12h6" stroke={red} strokeWidth="3" /></Svg></PageButton>
        <PageButton aria-label="ページ削除"><Svg><path d="M1 1h7l4 4v7H1zM8 1v4h4" stroke="#777" /><path d="M8 8l7 7M15 8l-7 7" stroke={red} strokeWidth="2" /></Svg></PageButton>
        <PageButton aria-label="ページ一覧"><Svg><path d="M.5 1.500h4l2 2v3h-6z" stroke={blue} /><path d="M9.500 1.500h4l2 2v3h-6zM.5 9.500h4l2 2v3h-6zM9.500 9.500h4l2 2v3h-6z" stroke="#777" /></Svg></PageButton>
        <PageTab>[元] なし</PageTab>
        <PageTab $active>[1] なし</PageTab>
      </PageBar>

      <StatusBar>
        <StatusMessage>矩形内選択移動: 基準点を指定([Ctrl]追加・解除)</StatusMessage>
        <StatusItem $width={271}>A1(横) &lt;46&gt; [554.0/801.0]</StatusItem>
        <StatusItem $width={126}>******.***</StatusItem>
        <StatusItem $width={125}>******.***</StatusItem>
        <StatusItem $width={45}>Page</StatusItem>
        <StatusItem $width={21}>1</StatusItem>
        <StatusItem $width={39}>測量系</StatusItem>
      </StatusBar>
    </Shell>
  );
}
